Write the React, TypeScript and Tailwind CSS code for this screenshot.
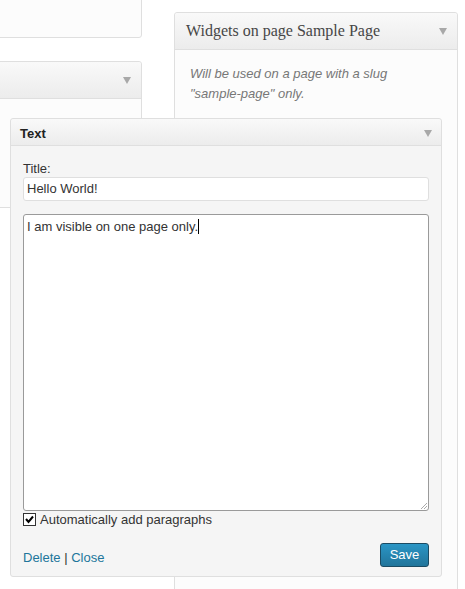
import React from 'react';

const sans = "font-['Liberation_Sans',Arial,sans-serif]";

const Arrow: React.FC<{ className?: string }> = ({ className }) => (
  <svg width="8" height="7" viewBox="0 0 8 7" className={className}>
    <path d="M0 0 H8 L4 7 Z" fill="#a8a8a8" />
  </svg>
);

const PanelHeader: React.FC<{ children?: React.ReactNode }> = ({ children }) => (
  <div className="h-[37px] flex items-center justify-between pl-[11px] pr-[10px] border-b border-[#dfdfdf] bg-gradient-to-b from-[#f9f9f9] to-[#ececec] rounded-t-[3px]">
    <span>{children}</span>
    <Arrow />
  </div>
);

export default function App() {
  return (
    <div className={`relative w-[465px] h-[589px] overflow-hidden bg-white ${sans} text-[13px] text-[#333]`}>
      <div className="flex gap-[32px]">
        {/* Left column */}
        <div className="w-[152px] ml-[-10px] flex flex-col gap-[23px]">
          <div className="h-[48px] mt-[-10px] bg-[#fcfcfc] border border-[#dfdfdf] rounded-[3px]" />
          <div className="h-[147px] bg-[#fcfcfc] border border-[#dfdfdf] rounded-[3px]">
            <PanelHeader />
          </div>
        </div>

        {/* Right column */}
        <div className="w-[284px] mt-[12px] h-[600px] bg-[#fcfcfc] border border-[#dfdfdf] rounded-[3px]">
          <PanelHeader>
            <span className="font-['Liberation_Serif','Times_New_Roman',serif] text-[16px] text-[#464646]">
              Widgets on page Sample Page
            </span>
          </PanelHeader>
          <p className="pl-[15px] pr-[10px] pt-[14px] italic text-[#777] leading-[20px]">
            Will be used on a page with a slug
            <br />
            "sample-page" only.
          </p>
        </div>
      </div>

      {/* Dragged Text widget */}
      <div className="absolute left-[10px] top-[118px] w-[432px] h-[459px] bg-[#f5f5f5] border border-[#dfdfdf] rounded-[3px] flex flex-col">
        <div className="h-[27px] flex items-center justify-between pl-[9px] pr-[9px] pt-[3px] border-b border-[#dfdfdf] bg-gradient-to-b from-[#f9f9f9] to-[#ececec] rounded-t-[3px]">
          <span className="font-bold text-[#222]">Text</span>
          <Arrow />
        </div>
        <div className="flex-1 flex flex-col px-[12px] pt-[14px]">
          <label className="leading-[17px]">Title:</label>
          <div className="h-[24px] w-[406px] bg-white border border-[#dfdfdf] rounded-[3px] flex items-center pl-[3px]">
            Hello World!
          </div>
          <div className="relative mt-[13px] h-[297px] w-[406px] bg-white border border-[#9a9a9a] rounded-[3px] pl-[3px] pt-[3px] leading-[17px]">
            I am visible on one page only.
            <span className="inline-block align-[-3px] w-px h-[15px] bg-black" />
            <svg width="7" height="7" viewBox="0 0 7 7" className="absolute right-[1px] bottom-[1px]">
              <path d="M1 7 L7 1 M4 7 L7 4" stroke="#aaa" strokeWidth="1" />
            </svg>
          </div>
          <div className="flex items-center gap-[4px] mt-[1px] h-[15px]">
            <span className="w-[13px] h-[13px] border border-[#333] bg-white flex items-center justify-center">
              <svg width="9" height="9" viewBox="0 0 9 9">
                <path d="M1 4 L3.5 7 L8 1.5" stroke="#000" strokeWidth="2" fill="none" />
              </svg>
            </span>
            <span className="leading-[15px]">Automatically add paragraphs</span>
          </div>
          <div className="flex items-end justify-between mt-[16px]">
            <div className="leading-[17px] mb-[1px]">
              <a className="text-[#21759b]">Delete</a>
              <span className="text-[#333]"> | </span>
              <a className="text-[#21759b]">Close</a>
            </div>
            <button className="h-[24px] w-[49px] rounded-[3px] border border-[#1b4b63] bg-gradient-to-b from-[#2a95c5] to-[#21759b] text-white text-[13px] leading-[20px]">
              Save
            </button>
          </div>
        </div>
      </div>
    </div>
  );
}
